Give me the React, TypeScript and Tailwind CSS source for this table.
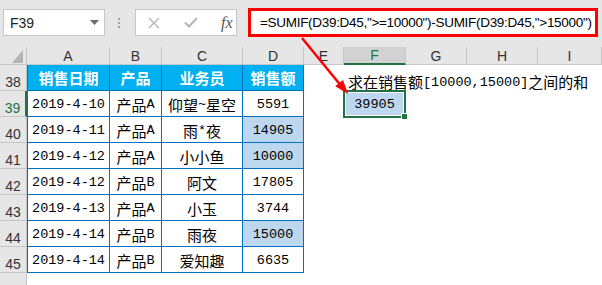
const COLS = ['A', 'B', 'C', 'D', 'E', 'F', 'G', 'H', 'I'];
const W = ['w-[83px]', 'w-[52px]', 'w-[81px]', 'w-[61px]', 'w-[40px]', 'w-[62px]', 'w-[61px]', 'w-[71px]', 'w-[64px]'];

const rows = [
  { n: 39, date: '2019-4-10', prod: '产品A', who: '仰望~星空', amt: '5591', hit: false },
  { n: 40, date: '2019-4-11', prod: '产品A', who: '雨*夜', amt: '14905', hit: true },
  { n: 41, date: '2019-4-12', prod: '产品A', who: '小小鱼', amt: '10000', hit: true },
  { n: 42, date: '2019-4-12', prod: '产品B', who: '阿文', amt: '17805', hit: false },
  { n: 43, date: '2019-4-13', prod: '产品A', who: '小玉', amt: '3744', hit: false },
  { n: 44, date: '2019-4-14', prod: '产品B', who: '雨夜', amt: '15000', hit: true },
  { n: 45, date: '2019-4-14', prod: '产品B', who: '爱知趣', amt: '6635', hit: false },
];

// SimSun-ish mix: half-width latin in mono, CJK slightly larger
function Txt({ s }: { s: string }) {
  const parts = s.split(/([\u2E80-\u9FFF]+)/).filter(Boolean);
  return (
    <>
      {parts.map((p, i) =>
        /[\u2E80-\u9FFF]/.test(p) ? (
          <span key={i} className="font-['Noto_Sans_CJK_SC',sans-serif] text-[15px]">
            {p}
          </span>
        ) : (
          <span key={i} className="font-['Liberation_Mono',monospace] text-[13.5px]">
            {p}
          </span>
        ),
      )}
    </>
  );
}

function Toolbar() {
  return (
    <div className="h-[47px] bg-[#e6e6e6]">
      <div className="flex h-[45px] items-center">
        <div className="ml-[3px] flex h-[27px] w-[102px] items-center justify-between border border-[#c6c6c6] bg-white pl-[6px] pr-[5px]">
          <span className="text-[14px] leading-none text-[#222]">F39</span>
          <svg width="9" height="5" viewBox="0 0 9 5">
            <polygon points="0,0 9,0 4.5,5" fill="#6b6b6b" />
          </svg>
        </div>
        <div className="ml-[13px] flex w-[3px] flex-col gap-[2px]">
          <span className="h-[2px] w-[2px] bg-[#a0a0a0]" />
          <span className="h-[2px] w-[2px] bg-[#a0a0a0]" />
          <span className="h-[2px] w-[2px] bg-[#a0a0a0]" />
        </div>
        <div className="ml-[14px] flex h-[27px] w-[102px] items-center border border-[#c6c6c6] bg-white pl-[12px]">
          <svg width="12" height="12" viewBox="0 0 12 12">
            <path d="M1 1 L11 11 M11 1 L1 11" stroke="#b5b5b5" strokeWidth="1.4" fill="none" />
          </svg>
          <svg className="ml-[24px]" width="14" height="11" viewBox="0 0 14 11">
            <path d="M1 5.5 L5 9.5 L13 1" stroke="#b5b5b5" strokeWidth="2" fill="none" />
          </svg>
          <span className="ml-[23px] font-['Liberation_Serif',serif] text-[16px] italic leading-none text-[#555]">
            fx
          </span>
        </div>
        <div className="ml-[11px] flex h-[29px] w-[350px] items-center border-[3px] border-[#ff0000] bg-white pl-[9px]">
          <span className="whitespace-nowrap text-[13.5px] leading-none tracking-[-0.3px]">
            =SUMIF(D39:D45,"&gt;=10000")-SUMIF(D39:D45,"&gt;15000")
          </span>
        </div>
      </div>
    </div>
  );
}

function ColumnHeaders() {
  return (
    <div className="flex h-[18px] bg-[#e6e6e6] text-[14px] leading-none text-[#333]">
      <div className="relative w-[27px] border-r border-b border-[#c6c6c6]">
        <svg className="absolute left-[12px] top-[3px]" width="11" height="13" viewBox="0 0 11 13">
          <polygon points="11,0 11,13 0,13" fill="#b4b4b4" />
        </svg>
      </div>
      {COLS.map((c, i) =>
        c === 'F' ? (
          <div
            key={c}
            className={`${W[i]} flex items-center justify-center border-r border-b-2 border-r-[#c6c6c6] border-b-[#217346] bg-[#d2d2d2] text-[#217346]`}
          >
            {c}
          </div>
        ) : (
          <div key={c} className={`${W[i]} flex items-center justify-center border-r border-b border-[#c6c6c6]`}>
            {c}
          </div>
        ),
      )}
    </div>
  );
}

function TitleRow() {
  const heads = ['销售日期', '产品', '业务员', '销售额'];
  return (
    <div className="flex h-[26px]">
      <div className="flex w-[27px] items-end justify-center border-r border-b border-[#c6c6c6] bg-[#e6e6e6] pb-[1px] text-[14px] leading-none text-[#333]">
        38
      </div>
      {heads.map((h, i) => (
        <div
          key={h}
          className={`${W[i]} flex items-center justify-center border-r border-b border-[#0070c0] bg-[#00b0f0] font-['Noto_Sans_CJK_SC',sans-serif] text-[15px] font-bold leading-none text-white ${i === 0 ? 'border-l' : ''}`}
        >
          {h}
        </div>
      ))}
      <div className="w-[40px]" />
      <div className="flex w-[62px] items-end whitespace-nowrap pb-[2px] pl-[4px] leading-none">
        <Txt s="求在销售额[10000,15000]之间的和" />
      </div>
    </div>
  );
}

function DataRow({ r }: { r: (typeof rows)[number] }) {
  const sel = r.n === 39;
  const cell = 'flex items-center justify-center border-r border-b border-[#0070c0] pt-[2px] leading-none';
  return (
    <div className="flex h-[26px]">
      <div
        className={`flex w-[27px] items-end justify-center border-b border-[#c6c6c6] bg-[#e6e6e6] pb-[1px] text-[14px] leading-none ${
          sel ? 'border-r-2 border-r-[#217346] text-[#217346]' : 'border-r text-[#333]'
        }`}
      >
        {r.n}
      </div>
      <div className={`w-[83px] border-l ${cell}`}>
        <Txt s={r.date} />
      </div>
      <div className={`w-[52px] ${cell}`}>
        <Txt s={r.prod} />
      </div>
      <div className={`w-[81px] ${cell}`}>
        <Txt s={r.who} />
      </div>
      <div className={`w-[61px] ${cell} ${r.hit ? 'bg-[#bdd7ee]' : ''}`}>
        <Txt s={r.amt} />
      </div>
      <div className="w-[40px]" />
      {sel ? (
        <div className="relative -mt-px ml-[-1px] h-[28px] w-[63px] border-2 border-[#217346]">
          <div className="flex h-full items-center justify-center border border-white bg-[#bdd7ee] pt-[1px] leading-none">
            <Txt s="39905" />
          </div>
          <span className="absolute -right-[4px] -bottom-[4px] h-[7px] w-[7px] border border-white bg-[#217346]" />
        </div>
      ) : (
        <div className="w-[62px]" />
      )}
    </div>
  );
}

function Arrow() {
  return (
    <svg className="pointer-events-none absolute left-0 top-0" width="602" height="285" viewBox="0 0 602 285">
      <line x1="302" y1="38" x2="340" y2="84.5" stroke="#ff0000" strokeWidth="2.5" />
      <polygon points="348,94 335.3,86.3 343,80" fill="#ff0000" />
    </svg>
  );
}

export default function App() {
  return (
    <div className="relative h-[285px] w-[602px] overflow-hidden bg-white font-['Liberation_Sans',sans-serif] text-black">
      <Toolbar />
      <ColumnHeaders />
      <TitleRow />
      {rows.map((r) => (
        <DataRow key={r.n} r={r} />
      ))}
      <div className="flex h-[12px]">
        <div className="w-[27px] border-r border-[#c6c6c6] bg-[#e6e6e6]" />
      </div>
      <Arrow />
    </div>
  );
}
